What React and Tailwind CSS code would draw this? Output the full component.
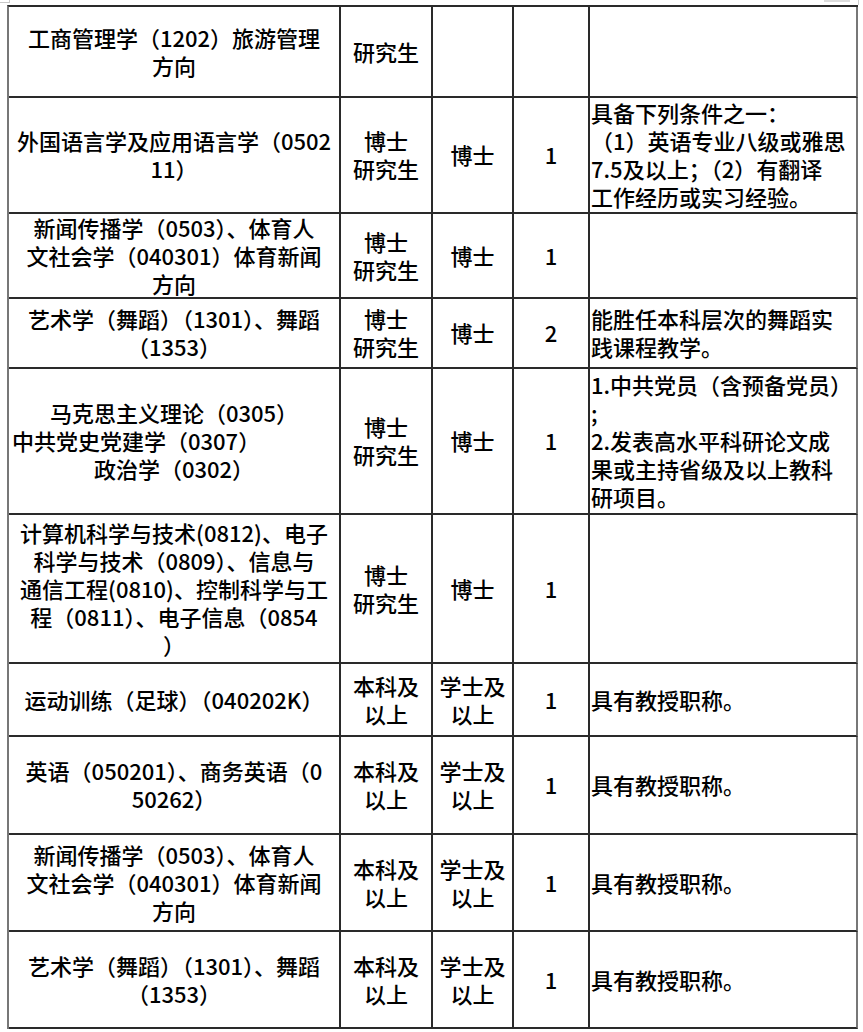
import React from 'react';

const rows = [
  { c1: ['工商管理学（1202）旅游管理', '方向'], c2: ['研究生'], c3: [], c4: '', c5: [] },
  {
    c1: ['外国语言学及应用语言学（0502', '11）'],
    c2: ['博士', '研究生'],
    c3: ['博士'],
    c4: '1',
    c5: ['具备下列条件之一：', '（1）英语专业八级或雅思', '7.5及以上；（2）有翻译', '工作经历或实习经验。'],
  },
  {
    c1: ['新闻传播学（0503）、体育人', '文社会学（040301）体育新闻', '方向'],
    c2: ['博士', '研究生'],
    c3: ['博士'],
    c4: '1',
    c5: [],
  },
  {
    c1: ['艺术学（舞蹈）（1301）、舞蹈', '（1353）'],
    c2: ['博士', '研究生'],
    c3: ['博士'],
    c4: '2',
    c5: ['能胜任本科层次的舞蹈实', '践课程教学。'],
  },
  {
    c1: ['马克思主义理论（0305）', '中共党史党建学（0307）', '政治学（0302）'],
    left: 1,
    c2: ['博士', '研究生'],
    c3: ['博士'],
    c4: '1',
    c5: ['1.中共党员（含预备党员）', ';', '2.发表高水平科研论文成', '果或主持省级及以上教科', '研项目。'],
  },
  {
    c1: ['计算机科学与技术(0812)、电子', '科学与技术（0809）、信息与', '通信工程(0810)、控制科学与工', '程（0811）、电子信息（0854', '）'],
    c2: ['博士', '研究生'],
    c3: ['博士'],
    c4: '1',
    c5: [],
  },
  { c1: ['运动训练（足球）（040202K）'], c2: ['本科及', '以上'], c3: ['学士及', '以上'], c4: '1', c5: ['具有教授职称。'] },
  { c1: ['英语（050201）、商务英语（0', '50262）'], c2: ['本科及', '以上'], c3: ['学士及', '以上'], c4: '1', c5: ['具有教授职称。'] },
  {
    c1: ['新闻传播学（0503）、体育人', '文社会学（040301）体育新闻', '方向'],
    c2: ['本科及', '以上'],
    c3: ['学士及', '以上'],
    c4: '1',
    c5: ['具有教授职称。'],
  },
  { c1: ['艺术学（舞蹈）（1301）、舞蹈', '（1353）'], c2: ['本科及', '以上'], c3: ['学士及', '以上'], c4: '1', c5: ['具有教授职称。'] },
];

const cell = 'border-r-2 border-b-2 border-[#2a2a2a] flex flex-col justify-center';

export default function App() {
  return (
    <div
      className="w-[863px] h-[1032px] bg-white text-black font-medium text-[22px] leading-[28px] overflow-hidden"
      style={{ fontFamily: '"Noto Sans CJK SC", "Noto Sans", sans-serif' }}
    >
      {/* faint crop marks along the top edge */}
      <div className="flex justify-between h-[5px]">
        <div className="w-[10px] h-[3px] border-b border-r border-[#c8c8c8]" />
        <div className="flex items-start gap-[8px] pr-[4px]">
          <div className="w-[26px] h-[2px] border border-[#dcdcdc]" />
          <div className="w-[1px] h-[5px] bg-[#cfcfcf]" />
        </div>
      </div>

      <div className="ml-[7px] w-[851px] border-t-2 border-l-2 border-t-[#2a2a2a] border-l-[#777] grid grid-cols-[332px_92px_81px_76px_268px] grid-rows-[91px_116px_85px_70px_146px_149px_73px_98px_97px_97px]">
        {rows.map((r, i) => (
          <React.Fragment key={i}>
            <div className={`${cell} items-center px-[3px] pb-[2px]`}>
              {r.c1.map((line, j) => (
                <div
                  key={j}
                  className={`whitespace-nowrap ${r.left === j ? 'self-start' : 'text-center'}`}
                >
                  {line}
                </div>
              ))}
            </div>
            <div className={`${cell} items-center pb-[2px]`}>
              {r.c2.map((line, j) => (
                <div key={j} className="whitespace-nowrap">{line}</div>
              ))}
            </div>
            <div className={`${cell} items-center pb-[2px]`}>
              {r.c3.map((line, j) => (
                <div key={j} className="whitespace-nowrap">{line}</div>
              ))}
            </div>
            <div className={`${cell} items-center pb-[2px]`}>{r.c4}</div>
            <div className={`${cell} items-start pl-[1px] pb-[2px] border-r-[#777]`}>
              {r.c5.map((line, j) => (
                <div key={j} className="whitespace-nowrap">{line}</div>
              ))}
            </div>
          </React.Fragment>
        ))}
      </div>
    </div>
  );
}
